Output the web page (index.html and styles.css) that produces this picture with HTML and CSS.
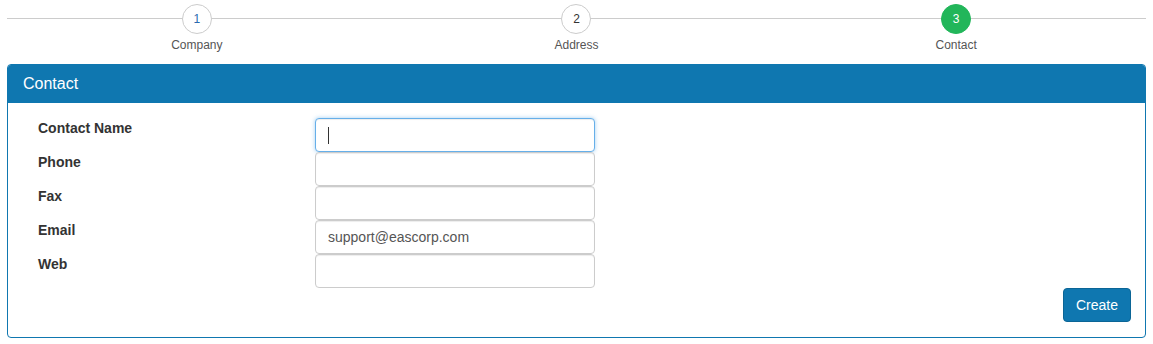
FILE: index.html
```html
<!DOCTYPE html>
<html>
<head>
<meta charset="utf-8">
<link rel="stylesheet" href="styles.css">
</head>
<body>
<div class="page">
  <div class="steps">
    <div class="step"><div class="circle">1</div><div class="step-label">Company</div></div>
    <div class="step"><div class="circle dark">2</div><div class="step-label">Address</div></div>
    <div class="step"><div class="circle active">3</div><div class="step-label">Contact</div></div>
  </div>
  <div class="panel">
    <div class="panel-heading">Contact</div>
    <div class="panel-body">
      <div class="form">
        <label class="lbl">Contact Name</label>
        <div class="field"><input class="input focus" type="text"><span class="caret"></span></div>
        <label class="lbl">Phone</label>
        <div class="field"><input class="input" type="text"></div>
        <label class="lbl">Fax</label>
        <div class="field"><input class="input" type="text"></div>
        <label class="lbl">Email</label>
        <div class="field"><input class="input" type="text" value="support@eascorp.com"></div>
        <label class="lbl">Web</label>
        <div class="field"><input class="input" type="text"></div>
      </div>
      <div class="actions"><button class="btn">Create</button></div>
    </div>
  </div>
</div>
</body>
</html>
```
FILE: styles.css
```css
* { box-sizing: border-box; }
html, body { margin: 0; padding: 0; background: #fff; }
body { font-family: "Liberation Sans", Arial, sans-serif; font-size: 14px; color: #333; }
.page { padding: 4px 7px 0 7px; }
.steps { display: grid; grid-template-columns: 1fr 1fr 1fr; position: relative; }
.steps::before { content: ""; position: absolute; left: 0; right: 0; top: 14px; height: 1px; background: #ccc; }
.step { display: flex; flex-direction: column; align-items: center; position: relative; }
.circle { width: 30px; height: 30px; border-radius: 50%; border: 1px solid #ccc; background: #fff; color: #2a6ab0; font-size: 12px; display: flex; align-items: center; justify-content: center; }
.circle.dark { color: #333; }
.circle.active { background: #22b65a; border-color: #22b65a; color: #fff; }
.step-label { font-size: 12px; color: #555; margin-top: 4px; line-height: 14px; }
.panel { margin-top: 12px; border: 1px solid #0f77b0; border-radius: 4px; overflow: hidden; }
.panel-heading { background: #0f77b0; color: #fff; font-size: 16px; height: 38px; line-height: 37px; padding: 0 15px; }
.panel-body { padding: 15px 15px 15px 15px; }
.form { display: grid; grid-template-columns: 292px 280px; }
.lbl { font-weight: bold; padding-left: 15px; line-height: 20px; padding-top: 0; }
.field { position: relative; }
.input { display: block; width: 280px; height: 34px; border: 1px solid #ccc; border-radius: 4px; padding: 6px 12px; font: 14px "Liberation Sans", Arial, sans-serif; color: #555; box-shadow: inset 0 1px 1px rgba(0,0,0,.075); outline: none; }
.input.focus { border-color: #66afe9; box-shadow: inset 0 1px 1px rgba(0,0,0,.075), 0 0 4px rgba(102,175,233,.6); }
.caret { position: absolute; left: 13px; top: 9px; width: 1px; height: 17px; background: #333; }
.actions { display: flex; justify-content: flex-end; }
.btn { background: #0f77b0; border: 1px solid #0b6596; color: #fff; font: 14px "Liberation Sans", Arial, sans-serif; height: 34px; padding: 6px 12px; border-radius: 4px; width: 68px; margin-right: -1px; }
```
